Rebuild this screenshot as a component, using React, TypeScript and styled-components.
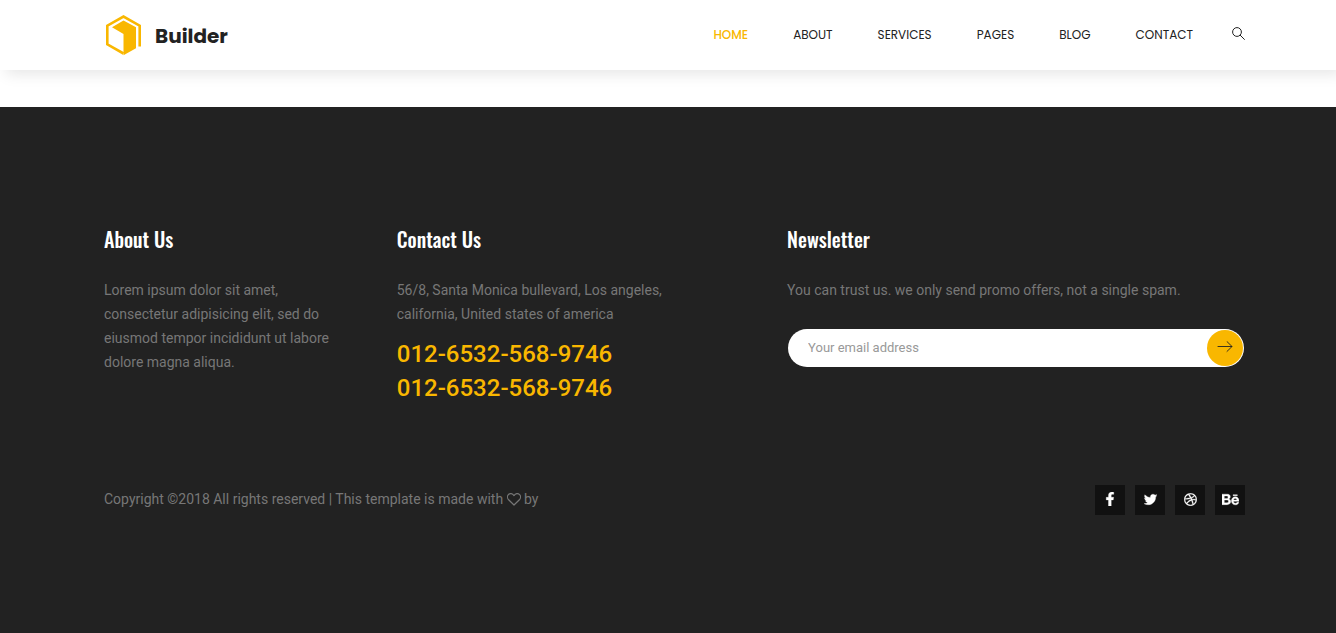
import React from 'react';
import styled, { createGlobalStyle } from 'styled-components';
import { FaFacebookF, FaTwitter, FaDribbble, FaBehance } from 'react-icons/fa';

const accent = '#f9b700';

const GlobalStyle = createGlobalStyle`
  *, *::before, *::after { box-sizing: border-box; }
  body {
    margin: 0;
    background: #fff;
    color: #777;
    font: 400 14px/24px Roboto, "Liberation Sans", sans-serif;
  }
`;

const Header = styled.header`
  position: relative;
  background: #fff;
  box-shadow: 6px 4px 14px rgba(0, 0, 0, 0.1);
`;

const Container = styled.div`
  padding: 0 91px 0 104px;
`;

const HeaderRow = styled(Container)`
  display: flex;
  align-items: center;
  justify-content: space-between;
  min-height: 70px;
`;

const Brand = styled.a`
  display: flex;
  align-items: center;
  gap: 13px;
  color: #222;
  font: 700 20px/30px Poppins, Inter, sans-serif;
  text-decoration: none;
`;

const BrandName = styled.span`
  padding-top: 2px;
`;

const Nav = styled.nav`
  display: flex;
  align-items: center;
  gap: 45px;
`;

const NavLink = styled.a<{ $active?: boolean }>`
  color: ${({ $active }) => ($active ? accent : '#222')};
  font: ${({ $active }) => ($active ? 500 : 400)} 12px/24px Poppins, Lato, sans-serif;
  text-transform: uppercase;
  text-decoration: none;
`;

const IconButton = styled.button`
  display: flex;
  margin-left: -6px;
  padding: 0 0 3px;
  border: 0;
  background: none;
  color: #222;
  cursor: pointer;
`;

const Footer = styled.footer`
  margin-top: 37px;
  padding: 120px 0 118px;
  background: #222;
`;

const Columns = styled.div`
  display: grid;
  grid-template-columns: 3fr 4fr 5fr;
  margin: 0 -15px;
`;

const Column = styled.section`
  padding: 0 15px;
`;

const Title = styled.h2`
  margin: 0 0 27px;
  color: #fff;
  font: 500 20px/24px Oswald, "Roboto Condensed", Roboto, sans-serif;
`;

const Text = styled.p<{ $width?: number }>`
  max-width: ${({ $width }) => ($width ? `${$width}px` : 'none')};
  margin: 0;
`;

const Phones = styled.address`
  display: flex;
  flex-direction: column;
  align-items: flex-start;
  margin-top: 11px;
  font-style: normal;
`;

const Phone = styled.a`
  color: ${accent};
  font-size: 24px;
  font-weight: 500;
  line-height: 34px;
  text-decoration: none;
`;

const Form = styled.form`
  display: flex;
  align-items: center;
  margin: 27px 1px 0;
  padding: 1px;
  border-radius: 20px;
  background: #fff;
`;

const Email = styled.input`
  flex: 1;
  min-width: 0;
  height: 36px;
  padding: 0 19px 2px;
  border: 0;
  background: none;
  color: #222;
  font: 400 13px/20px Roboto, "Liberation Sans", sans-serif;
  outline: 0;

  &::placeholder { color: #999; opacity: 1; }
`;

const Submit = styled.button`
  display: flex;
  align-items: center;
  justify-content: center;
  width: 36px;
  height: 36px;
  padding: 0 0 2px;
  border: 0;
  border-radius: 50%;
  background: ${accent};
  color: #222;
  cursor: pointer;
`;

const BottomRow = styled.div`
  display: flex;
  align-items: flex-start;
  justify-content: space-between;
  margin-top: 80px;
`;

const Copyright = styled.p`
  margin: 0;
  padding-top: 2px;
`;

const HeartIcon = styled.svg`
  vertical-align: -2px;
`;

const Socials = styled.div`
  display: flex;
  gap: 10px;
`;

const Social = styled.a<{ $size: number }>`
  display: flex;
  align-items: center;
  justify-content: center;
  width: 30px;
  height: 30px;
  padding-bottom: 2px;
  background: #111;
  color: #fff;
  font-size: ${({ $size }) => $size}px;

  svg { stroke: currentColor; stroke-width: 12px; }
`;

const Logo = () => (
  <svg width="38" height="42" viewBox="-2 -1 38 42" aria-hidden="true">
    <path d="M33.700 31.500V10.700L17.500 1.500 1.300 10.700v18.600l16.200 9.200" fill="none" stroke={accent} strokeWidth="2.600" />
    <path d="M6 12.200 17.500 5.500 30 12.200v21.100L17.500 40.300V19z" fill={accent} />
  </svg>
);

const SearchIcon = () => (
  <svg width="13" height="13" viewBox="0 0 13 13" fill="none" stroke="currentColor" aria-hidden="true">
    <circle cx="5" cy="5" r="4.400" />
    <path d="m8.200 8.200 4.200 4.200" strokeLinecap="round" />
  </svg>
);

const ArrowIcon = () => (
  <svg width="16" height="12" viewBox="0 0 16 12" fill="none" stroke="currentColor" strokeLinecap="round" aria-hidden="true">
    <path d="M1 5.500h14M10 .6l5 4.900-5 4.900" strokeWidth=".9" />
  </svg>
);

const Heart = () => (
  <HeartIcon width="14" height="13" viewBox="0 0 14 13" fill="none" stroke="currentColor" role="img" aria-label="love">
    <path
      d="M7 12 1.600 6.800C.2 5.300.2 2.800 1.400 1.600 3 .1 5.500.4 7 2.600 8.500.4 11 .1 12.600 1.600c1.200 1.200 1.200 3.700-.2 5.200z"
      strokeWidth="1.200"
      strokeLinejoin="round"
    />
  </HeartIcon>
);

const links = ['Home', 'About', 'Services', 'Pages', 'Blog', 'Contact'];

const socials = [
  { name: 'Facebook', Icon: FaFacebookF, size: 14 },
  { name: 'Twitter', Icon: FaTwitter, size: 13 },
  { name: 'Dribbble', Icon: FaDribbble, size: 13 },
  { name: 'Behance', Icon: FaBehance, size: 17 },
];

export default function App() {
  return (
    <>
      <GlobalStyle />
      <Header>
        <HeaderRow>
          <Brand href="#">
            <Logo />
            <BrandName>Builder</BrandName>
          </Brand>
          <Nav aria-label="Main">
            {links.map((link, i) => (
              <NavLink key={link} href="#" $active={i === 0}>
                {link}
              </NavLink>
            ))}
            <IconButton type="button" aria-label="Search">
              <SearchIcon />
            </IconButton>
          </Nav>
        </HeaderRow>
      </Header>
      <Footer>
        <Container>
          <Columns>
            <Column>
              <Title>About Us</Title>
              <Text $width={240}>
                Lorem ipsum dolor sit amet, consectetur adipisicing elit, sed do eiusmod tempor
                incididunt ut labore dolore magna aliqua.
              </Text>
            </Column>
            <Column>
              <Title>Contact Us</Title>
              <Text $width={280}>
                56/8, Santa Monica bullevard, Los angeles, california, United states of america
              </Text>
              <Phones>
                <Phone href="tel:01265325689746">012-6532-568-9746</Phone>
                <Phone href="tel:01265325689746">012-6532-568-9746</Phone>
              </Phones>
            </Column>
            <Column>
              <Title>Newsletter</Title>
              <Text>You can trust us. we only send promo offers, not a single spam.</Text>
              <Form onSubmit={(e) => e.preventDefault()}>
                <Email type="email" aria-label="Email" placeholder="Your email address" />
                <Submit type="submit" aria-label="Subscribe">
                  <ArrowIcon />
                </Submit>
              </Form>
            </Column>
          </Columns>
          <BottomRow>
            <Copyright>
              Copyright ©2018 All rights reserved | This template is made with <Heart /> by
            </Copyright>
            <Socials>
              {socials.map(({ name, Icon, size }) => (
                <Social key={name} href="#" aria-label={name} $size={size}>
                  <Icon />
                </Social>
              ))}
            </Socials>
          </BottomRow>
        </Container>
      </Footer>
    </>
  );
}
